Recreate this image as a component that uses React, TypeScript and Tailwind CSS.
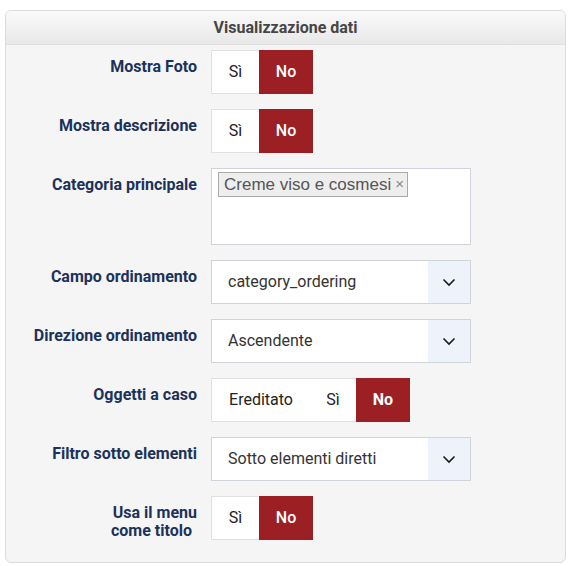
import { ReactNode } from "react";

const labelCls =
  "w-[191px] shrink-0 pt-[8px] text-right text-[16px] leading-[18px] font-bold text-[#1b325a] whitespace-nowrap";

function Row({ label, children }: { label: ReactNode; children: ReactNode }) {
  return (
    <div className="flex gap-[14px]">
      <div className={labelCls}>{label}</div>
      {children}
    </div>
  );
}

function Toggle({ options, boldNo }: { options: string[]; boldNo?: boolean }) {
  return (
    <div className="flex h-[44px] text-[16px]">
      {options.map((opt, i) => {
        const first = i === 0;
        if (opt === "No") {
          return (
            <div
              key={opt}
              className={`flex w-[54px] items-center justify-center bg-[#9c1f24] text-white ${boldNo ? "font-bold" : "font-medium"}`}
            >
              No
            </div>
          );
        }
        return (
          <div
            key={opt}
            className={`flex items-center justify-center border-y border-[#dfe1e5] bg-white text-[#222] ${first ? "border-l" : ""} ${opt === "Ereditato" ? "w-[99px]" : first ? "w-[48px]" : "w-[46px]"}`}
          >
            {opt}
          </div>
        );
      })}
    </div>
  );
}

function Select({ value }: { value: string }) {
  return (
    <div className="flex h-[44px] w-[260px] border border-[#ced4da] bg-white">
      <div className="flex flex-1 items-center pl-[16px] text-[16px] text-[#333]">{value}</div>
      <div className="flex w-[42px] items-center justify-center bg-[#eef3fb]">
        <svg width="14" height="9" viewBox="0 0 14 9" fill="none">
          <path d="M1.5 1.5 7 7l5.5-5.5" stroke="#1a1a1a" strokeWidth="1.6" />
        </svg>
      </div>
    </div>
  );
}

export default function App() {
  return (
    <div className="min-h-[566px] bg-white pt-[10px] pl-[5px] font-['Roboto',sans-serif]">
      <div className="w-[561px] overflow-hidden rounded-[6px] border border-[#dcdcdc] bg-[#f5f5f5]">
        <div className="flex h-[34px] items-center justify-center border-b border-[#dedede] bg-gradient-to-b from-[#fafafa] to-[#e8e8e8] text-[16px] font-bold text-[#454545]">
          Visualizzazione dati
        </div>
        <div className="flex flex-col gap-[15px] pt-[5px] pb-[22px]">
          <Row label="Mostra Foto">
            <Toggle options={["Sì", "No"]} />
          </Row>
          <Row label="Mostra descrizione">
            <Toggle options={["Sì", "No"]} />
          </Row>
          <Row label="Categoria principale">
            <div className="h-[77px] w-[260px] border border-[#ced4da] bg-white pt-[3px] pl-[6px]">
              <span className="inline-flex h-[25px] items-center border border-[#aaa] bg-[#eee] pr-[3px] pl-[5px] font-['Liberation_Sans',sans-serif] text-[17px] text-[#555]">
                Creme viso e cosmesi
                <span className="ml-[4px] text-[15px] text-[#888]">×</span>
              </span>
            </div>
          </Row>
          <Row label="Campo ordinamento">
            <Select value="category_ordering" />
          </Row>
          <Row label="Direzione ordinamento">
            <Select value="Ascendente" />
          </Row>
          <Row label="Oggetti a caso">
            <Toggle options={["Ereditato", "Sì", "No"]} boldNo />
          </Row>
          <Row label="Filtro sotto elementi">
            <Select value="Sotto elementi diretti" />
          </Row>
          <Row
            label={
              <>
                Usa il menu
                <br />
                <span className="pr-[5px]">come titolo</span>
              </>
            }
          >
            <Toggle options={["Sì", "No"]} />
          </Row>
        </div>
      </div>
    </div>
  );
}
